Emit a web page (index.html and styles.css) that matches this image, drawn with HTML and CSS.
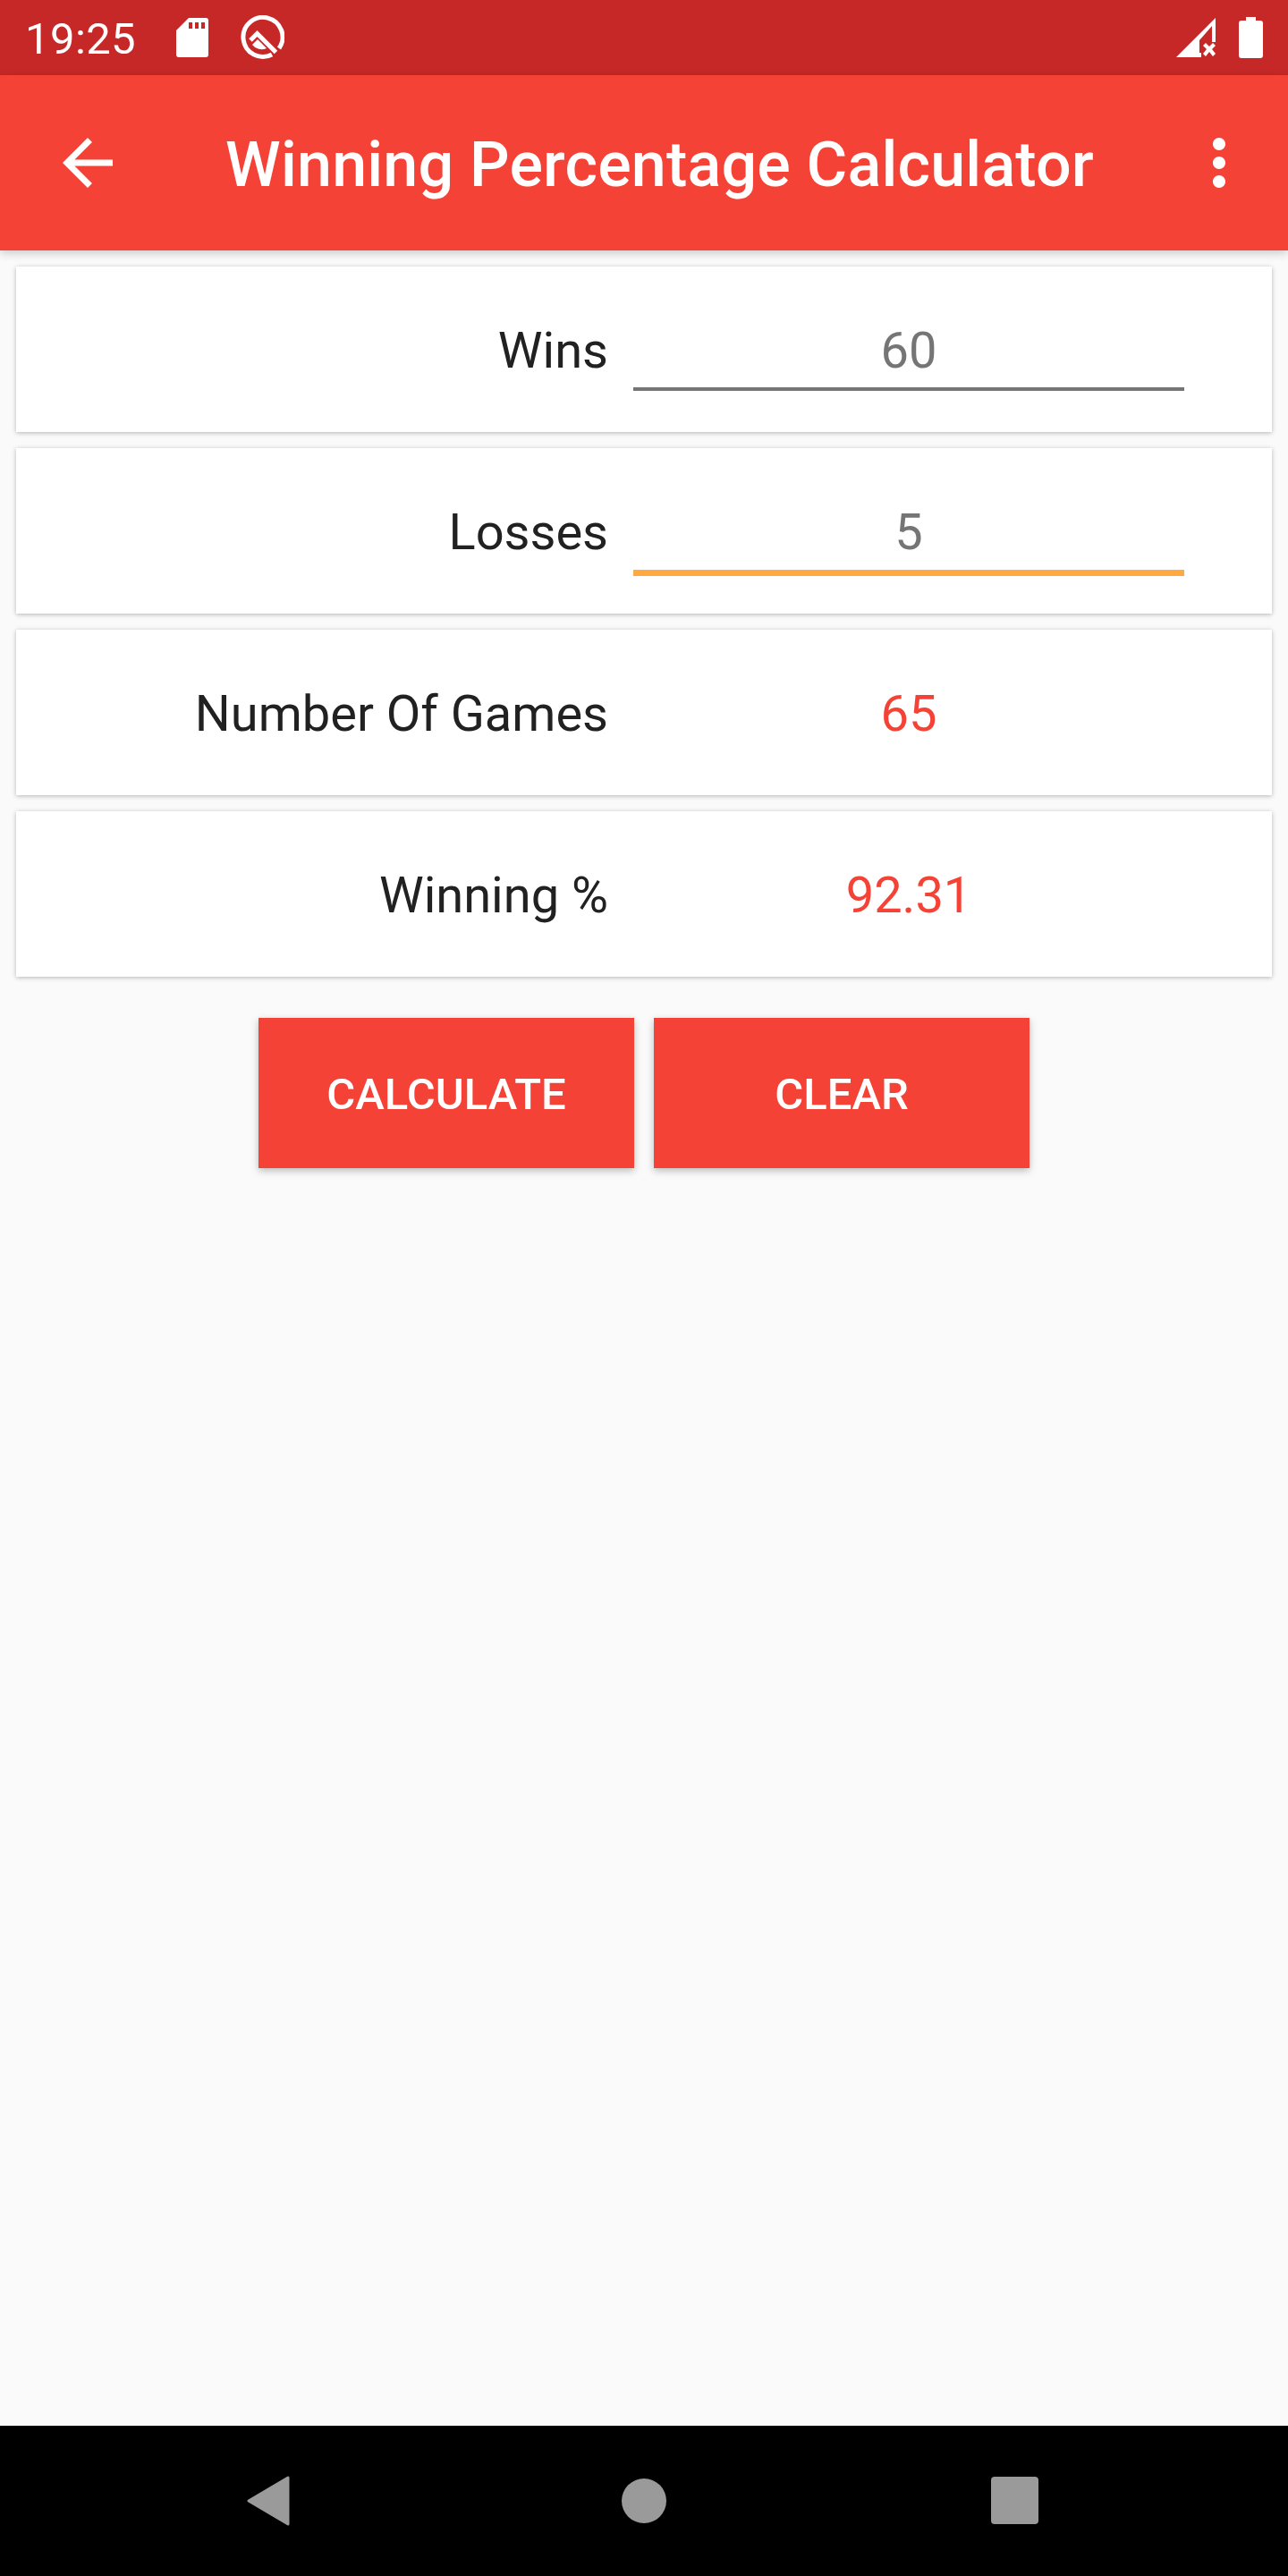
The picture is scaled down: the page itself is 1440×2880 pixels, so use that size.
FILE: index.html
```html
<!DOCTYPE html>
<html lang="en">
<head>
    <meta charset="UTF-8">
    <meta name="viewport" content="width=device-width, initial-scale=1.0">
    <title>Winning Percentage Calculator</title>
    <link rel="stylesheet" href="styles.css">
</head>
<body>
    <div class="screen">
        <div class="status-bar">
            <span class="clock">19:25</span>
            <svg class="sd-icon" viewBox="0 0 36 44"><path fill="#fff" fill-rule="evenodd" d="M14 0H33a3 3 0 0 1 3 3V41a3 3 0 0 1-3 3H3a3 3 0 0 1-3-3V14zM14 5V12H18V5zM21 5V12H25V5zM28 5V12H32V5z"/></svg>
            <svg class="q-icon" viewBox="0 0 50 50">
                <path fill="none" stroke="#fff" stroke-width="5" d="M36 44A22 22 0 1 1 44 37"/>
                <path fill="none" stroke="#fff" stroke-width="5" d="M12 28L19.500 20.500L40.500 41.500"/>
                <path fill="#fff" d="M14 33L20 27L30 37A13 13 0 0 1 14 33z"/>
            </svg>
            <span class="status-gap"></span>
            <svg class="signal-icon" viewBox="0 0 45 44"><path fill="#fff" fill-rule="evenodd" d="M44 0V27H40V9L26 25V39H28V44H0zM30 31L33 28L37 32L41 28L44 31L40 35L44 40L41 43L37 38L33 43L30 40L34 35z"/></svg>
            <svg class="battery-icon" viewBox="0 0 27 46"><path fill="#fff" d="M8 0H19V4H24a3 3 0 0 1 3 3V43a3 3 0 0 1-3 3H3a3 3 0 0 1-3-3V7a3 3 0 0 1 3-3H8z"/></svg>
        </div>

        <header class="app-bar">
            <svg class="bar-icon" viewBox="0 0 24 24"><path fill="#fff" d="M20 11H7.830l5.590-5.590L12 4l-8 8 8 8 1.410-1.410L7.830 13H20v-2z"/></svg>
            <h1 class="app-title">Winning Percentage Calculator</h1>
            <svg class="bar-icon" viewBox="0 0 24 24"><path fill="#fff" d="M12 8c1.100 0 2-.9 2-2s-.9-2-2-2-2 .9-2 2 .9 2 2 2zm0 2c-1.100 0-2 .9-2 2s.9 2 2 2 2-.9 2-2-.9-2-2-2zm0 6c-1.100 0-2 .9-2 2s.9 2 2 2 2-.9 2-2-.9-2-2-2z"/></svg>
        </header>

        <main class="content">
            <div class="card">
                <div class="label">Wins</div>
                <div class="field">
                    <div class="field-text">60</div>
                </div>
            </div>
            <div class="card">
                <div class="label">Losses</div>
                <div class="field focused">
                    <div class="field-text">5</div>
                </div>
            </div>
            <div class="card">
                <div class="label">Number Of Games</div>
                <div class="result">65</div>
            </div>
            <div class="card">
                <div class="label">Winning %</div>
                <div class="result">92.31</div>
            </div>
            <div class="buttons">
                <button class="btn">CALCULATE</button>
                <button class="btn">CLEAR</button>
            </div>
        </main>

        <nav class="nav-bar">
            <svg class="nav-back" viewBox="0 0 48 56"><path fill="#9a9a9a" stroke="#9a9a9a" stroke-width="3" stroke-linejoin="round" d="M46 2V54L2 28z"/></svg>
            <span class="nav-home"></span>
            <span class="nav-recent"></span>
        </nav>
    </div>
</body>
</html>
```

FILE: styles.css
```css
* {
    box-sizing: border-box;
}

body {
    margin: 0;
    font-family: 'Roboto', 'Liberation Sans', sans-serif;
    background: #fafafa;
}

.screen {
    width: 1440px;
    height: 2880px;
    display: flex;
    flex-direction: column;
}

.status-bar {
    height: 84px;
    background: #c62828;
    display: flex;
    align-items: center;
    padding: 0 28px 0 28px;
    color: #fff;
}

.clock {
    font-size: 49px;
    letter-spacing: 0.4px;
    padding-top: 2px;
    width: 169px;
}

.sd-icon {
    width: 36px;
    height: 44px;
}

.q-icon {
    width: 50px;
    height: 50px;
    margin-left: 35px;
}

.status-gap {
    flex: 1;
}

.signal-icon {
    width: 45px;
    height: 44px;
}

.battery-icon {
    width: 27px;
    height: 46px;
    margin-left: 25px;
}

.app-bar {
    height: 196px;
    background: #f44336;
    display: flex;
    align-items: center;
    padding: 0 35px 0 56px;
    box-shadow: 0 3px 10px rgba(0, 0, 0, 0.2);
    position: relative;
}

.bar-icon {
    width: 84px;
    height: 84px;
    flex: none;
}

.app-title {
    flex: 1;
    margin: 0;
    padding: 4px 0 0 14px;
    color: #fff;
    font-size: 70px;
    font-weight: 500;
    letter-spacing: 0.2px;
    text-align: center;
}

.content {
    flex: 1;
    padding: 18px;
    display: flex;
    flex-direction: column;
    gap: 18px;
}

.card {
    height: 185px;
    background: #fff;
    box-shadow: 0 1px 5px rgba(0, 0, 0, 0.28);
    display: grid;
    grid-template-columns: 662px 616px;
    column-gap: 28px;
    align-items: center;
}

.label {
    font-size: 56px;
    color: #212121;
    text-align: right;
    padding-top: 3px;
}

.field {
    height: 139px;
    align-self: start;
    border-bottom: 4px solid #757575;
    padding-top: 61px;
    text-align: center;
}

.field.focused {
    height: 143px;
    border-bottom: 7px solid #ffa940;
}

.field-text {
    font-size: 56px;
    color: #757575;
}

.result {
    font-size: 56px;
    color: #f44336;
    text-align: center;
    padding-top: 3px;
}

.buttons {
    display: flex;
    justify-content: center;
    gap: 22px;
    margin-top: 28px;
}

.btn {
    width: 420px;
    height: 168px;
    border: none;
    padding: 2px 0 0;
    background: #f44336;
    color: #fff;
    font-family: inherit;
    font-size: 49px;
    font-weight: 500;
    box-shadow: 0 3px 8px rgba(0, 0, 0, 0.25);
}

.nav-bar {
    height: 168px;
    background: #000;
    position: relative;
}

.nav-back {
    position: absolute;
    left: 276px;
    top: 56px;
    width: 48px;
    height: 56px;
}

.nav-home {
    position: absolute;
    left: 695px;
    top: 59px;
    width: 50px;
    height: 50px;
    border-radius: 50%;
    background: #9a9a9a;
}

.nav-recent {
    position: absolute;
    left: 1108px;
    top: 57px;
    width: 53px;
    height: 53px;
    border-radius: 4px;
    background: #9a9a9a;
}
```
